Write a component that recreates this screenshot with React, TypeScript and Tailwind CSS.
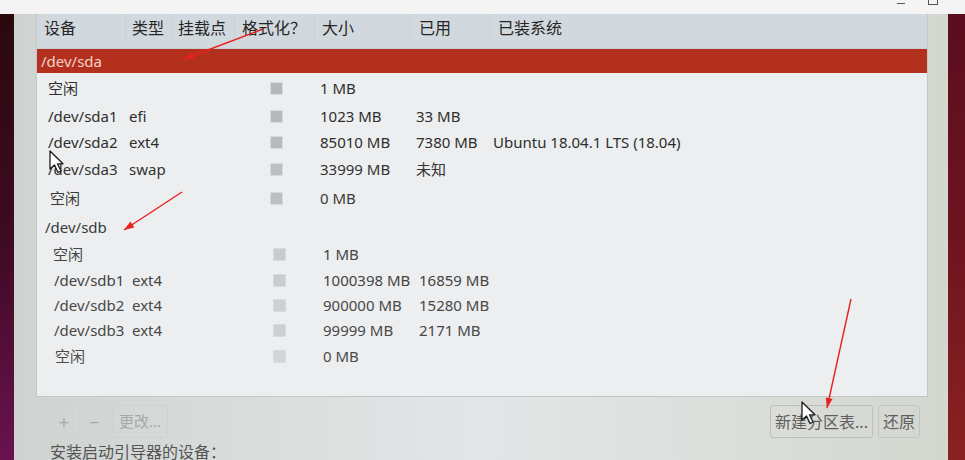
type Row = {
  dev: string;
  type?: string;
  size?: string;
  used?: string;
  os?: string;
  disk?: boolean;
  selected?: boolean;
  h: string;
  pad: string;
  shift: string;
  text: string;
  box?: string;
};

const rows: Row[] = [
  { dev: '/dev/sda', disk: true, selected: true, h: 'h-[24px]', pad: 'pl-[4px]', shift: 'pl-0', text: 'text-[#f3d2c8]' },
  { dev: '空闲', size: '1 MB', h: 'h-[30px]', pad: 'pl-[11px]', shift: 'pl-0', text: 'text-[#2e2e2e]', box: 'bg-[#b4b8ba]' },
  { dev: '/dev/sda1', type: 'efi', size: '1023 MB', used: '33 MB', h: 'h-[26px]', pad: 'pl-[11px]', shift: 'pl-0', text: 'text-[#2e2e2e]', box: 'bg-[#b6babc]' },
  {
    dev: '/dev/sda2',
    type: 'ext4',
    size: '85010 MB',
    used: '7380 MB',
    os: 'Ubuntu 18.04.1 LTS (18.04)',
    h: 'h-[26px]',
    pad: 'pl-[11px]',
    shift: 'pl-0',
    text: 'text-[#2e2e2e]',
    box: 'bg-[#b6babc]',
  },
  { dev: '/dev/sda3', type: 'swap', size: '33999 MB', used: '未知', h: 'h-[29px]', pad: 'pl-[11px]', shift: 'pl-0', text: 'text-[#333333]', box: 'bg-[#bcc0c2]' },
  { dev: '空闲', size: '0 MB', h: 'h-[29px]', pad: 'pl-[13px]', shift: 'pl-0', text: 'text-[#3a3a3a]', box: 'bg-[#bcc0c2]' },
  { dev: '/dev/sdb', disk: true, h: 'h-[28px]', pad: 'pl-[8px]', shift: 'pl-0', text: 'text-[#3a3a3a]' },
  { dev: '空闲', size: '1 MB', h: 'h-[27px]', pad: 'pl-[13px]', shift: 'pl-[3px]', text: 'text-[#444444]', box: 'bg-[#c9cccd]' },
  { dev: '/dev/sdb1', type: 'ext4', size: '1000398 MB', used: '16859 MB', h: 'h-[25px]', pad: 'pl-[14px]', shift: 'pl-[3px]', text: 'text-[#444444]', box: 'bg-[#c9cccd]' },
  { dev: '/dev/sdb2', type: 'ext4', size: '900000 MB', used: '15280 MB', h: 'h-[24px]', pad: 'pl-[14px]', shift: 'pl-[3px]', text: 'text-[#484848]', box: 'bg-[#cdd0d1]' },
  { dev: '/dev/sdb3', type: 'ext4', size: '99999 MB', used: '2171 MB', h: 'h-[26px]', pad: 'pl-[14px]', shift: 'pl-[3px]', text: 'text-[#484848]', box: 'bg-[#cdd0d1]' },
  { dev: '空闲', size: '0 MB', h: 'h-[26px]', pad: 'pl-[15px]', shift: 'pl-[3px]', text: 'text-[#4a4a4a]', box: 'bg-[#d2d5d6]' },
];

const cols = 'grid grid-cols-[88px_46px_63px_80px_95px_80px_1fr]';

const headers = [
  { label: '设备', pad: 'pl-[7px]' },
  { label: '类型', pad: 'pl-[6px]' },
  { label: '挂载点', pad: 'pl-[6px]' },
  { label: '格式化？', pad: 'pl-[7px]' },
  { label: '大小', pad: 'pl-[7px]' },
  { label: '已用', pad: 'pl-[9px]' },
  { label: '已装系统', pad: 'pl-[8px]' },
];

const arrows = [
  [263, 29, 184, 59],
  [182, 192, 124, 230],
  [851, 299, 827, 408],
];

const head = (x1: number, y1: number, x2: number, y2: number) => {
  const a = Math.atan2(y2 - y1, x2 - x1);
  const len = 10;
  const w = 3.5;
  const bx = x2 - len * Math.cos(a);
  const by = y2 - len * Math.sin(a);
  const px = -Math.sin(a) * w;
  const py = Math.cos(a) * w;
  return `${x2},${y2} ${bx + px},${by + py} ${bx - px},${by - py}`;
};

const Cursor = ({ x, y }: { x: number; y: number }) => (
  <path
    transform={`translate(${x} ${y})`}
    d="M0 0 L0 18 L4.5 14 L8 21.5 L11 20 L7.5 12.8 L13 12.8 Z"
    fill="#ffffff"
    stroke="#1c1c1c"
    strokeWidth="1.3"
    strokeLinejoin="round"
  />
);

const Annotations = () => (
  <svg className="absolute inset-0 pointer-events-none" width="965" height="460">
    {arrows.map(([x1, y1, x2, y2], i) => (
      <g key={i}>
        <line x1={x1} y1={y1} x2={x2} y2={y2} stroke="#e8211d" strokeWidth="1.4" />
        <polygon points={head(x1, y1, x2, y2)} fill="#e8211d" />
      </g>
    ))}
    <Cursor x={50} y={151} />
    <Cursor x={802} y={402} />
  </svg>
);

const PartitionRow = ({ row }: { row: Row }) => {
  if (row.disk) {
    return (
      <div className={`${row.h} flex items-center ${row.selected ? 'bg-[#b3301f]' : ''} ${row.text}`}>
        <span className={row.pad}>{row.dev}</span>
      </div>
    );
  }

  return (
    <div className={`${cols} ${row.h} ${row.shift} items-center ${row.text}`}>
      <span className={row.pad}>{row.dev}</span>
      <span className="pl-[4px]">{row.type}</span>
      <span />
      <span className="pl-[36px] flex">
        <span className={`w-[13px] h-[13px] ${row.box} border border-[#d8dbdc] rounded-[1px]`} />
      </span>
      <span className="pl-[6px]">{row.size}</span>
      <span className="pl-[7px]">{row.used}</span>
      <span className="pl-[4px] whitespace-nowrap">{row.os}</span>
    </div>
  );
};

const App = () => {
  return (
    <div className="relative w-[965px] h-[460px] overflow-hidden flex flex-col bg-[#f3f3f3] font-['Noto_Sans','Noto_Sans_CJK_SC',sans-serif] text-[15px] leading-none">
      <div className="h-[14px] shrink-0 bg-[#f4f4f4] flex justify-end items-start pr-[27px] gap-[23px]">
        <span className="w-[8px] h-[1px] bg-[#555555] mt-[3px]" />
        <span className="w-[10px] h-[10px] border border-[#555555] -mt-[5px]" />
      </div>

      <div className="flex flex-1 min-h-0">
        <div className="w-[14px] bg-gradient-to-b from-[#2a090d] via-[#3e0a22] to-[#6a1250]" />

        <div className="flex-1 flex flex-col bg-gradient-to-r from-[#cfd3d0] via-[#e3e6e7] to-[#d4d7cf] pl-[22px] pr-[20px]">
          <div className="h-[383px] shrink-0 flex flex-col bg-[#eceeef] border-x border-b border-[#c3c7c8]">
            <div className={`${cols} h-[35px] shrink-0 items-center pb-[6px] bg-[#d2d9de] text-[16px] text-[#262626] border-b border-[#c8ced2]`}>
              {headers.map((h, i) => (
                <span key={h.label} className={`${h.pad} h-full flex items-center ${i > 0 ? 'border-l border-[#cbd2d6]' : ''}`}>
                  {h.label}
                </span>
              ))}
            </div>
            {rows.map((row, i) => (
              <PartitionRow key={i} row={row} />
            ))}
          </div>

          <div className="mt-[8px] h-[33px] shrink-0 flex items-stretch justify-between pl-[12px] pr-[8px]">
            <div className="flex text-[#a9a9a9] text-[15px]">
              <span className="w-[32px] flex items-center justify-center border border-[#d0d2d2] rounded-l-[3px] text-[18px]">+</span>
              <span className="w-[30px] flex items-center justify-center border-y border-r border-[#d0d2d2] text-[18px]">−</span>
              <span className="w-[56px] flex items-center justify-center border border-[#d0d2d2] rounded-r-[3px] ml-[2px]">更改...</span>
            </div>
            <div className="flex gap-[5px] text-[#5e5e5e] text-[16px]">
              <span className="w-[103px] flex items-center justify-center border border-[#bdbfbf] rounded-[3px]">新建分区表...</span>
              <span className="w-[42px] flex items-center justify-center border border-[#c3c5c5] rounded-[3px]">还原</span>
            </div>
          </div>

          <div className="mt-[6px] pl-[14px] text-[16px] leading-[16px] text-[#555555] whitespace-nowrap">安装启动引导器的设备：</div>
        </div>

        <div className="w-[17px] bg-gradient-to-b from-[#5a0d1e] via-[#6e1420] to-[#8a2220]" />
      </div>

      <Annotations />
    </div>
  );
};

export default App;
